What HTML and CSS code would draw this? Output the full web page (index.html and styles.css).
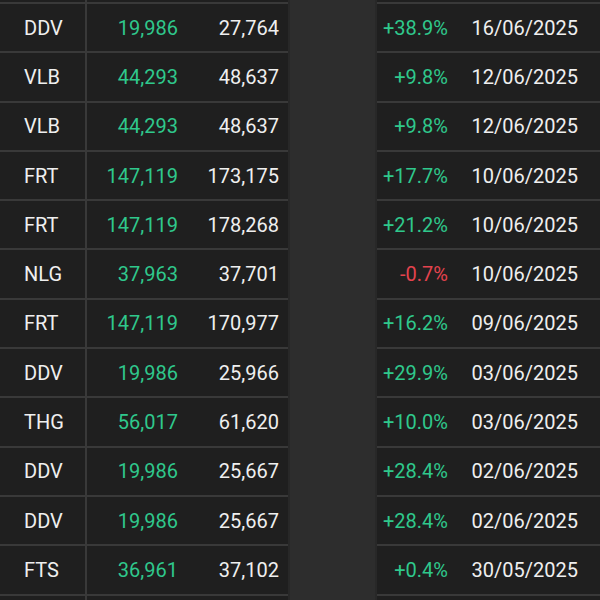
FILE: index.html
```html
<!DOCTYPE html>
<html>
<head>
<meta charset="utf-8">
<link rel="stylesheet" href="styles.css">
</head>
<body>
<div class="board">
  <div class="block left">
    <div class="row"><div class="tk"></div><div class="num up"></div><div class="num"></div></div>
    <div class="row"><div class="tk">DDV</div><div class="num up">19,986</div><div class="num">27,764</div></div>
    <div class="row"><div class="tk">VLB</div><div class="num up">44,293</div><div class="num">48,637</div></div>
    <div class="row"><div class="tk">VLB</div><div class="num up">44,293</div><div class="num">48,637</div></div>
    <div class="row"><div class="tk">FRT</div><div class="num up">147,119</div><div class="num">173,175</div></div>
    <div class="row"><div class="tk">FRT</div><div class="num up">147,119</div><div class="num">178,268</div></div>
    <div class="row"><div class="tk">NLG</div><div class="num up">37,963</div><div class="num">37,701</div></div>
    <div class="row"><div class="tk">FRT</div><div class="num up">147,119</div><div class="num">170,977</div></div>
    <div class="row"><div class="tk">DDV</div><div class="num up">19,986</div><div class="num">25,966</div></div>
    <div class="row"><div class="tk">THG</div><div class="num up">56,017</div><div class="num">61,620</div></div>
    <div class="row"><div class="tk">DDV</div><div class="num up">19,986</div><div class="num">25,667</div></div>
    <div class="row"><div class="tk">DDV</div><div class="num up">19,986</div><div class="num">25,667</div></div>
    <div class="row"><div class="tk">FTS</div><div class="num up">36,961</div><div class="num">37,102</div></div>
    <div class="row"><div class="tk"></div><div class="num up"></div><div class="num"></div></div>
  </div>
  <div class="divider"></div>
  <div class="mid"></div>
  <div class="divider"></div>
  <div class="block right">
    <div class="row"><div class="pct up"></div><div class="date"></div></div>
    <div class="row"><div class="pct up">+38.9%</div><div class="date">16/06/2025</div></div>
    <div class="row"><div class="pct up">+9.8%</div><div class="date">12/06/2025</div></div>
    <div class="row"><div class="pct up">+9.8%</div><div class="date">12/06/2025</div></div>
    <div class="row"><div class="pct up">+17.7%</div><div class="date">10/06/2025</div></div>
    <div class="row"><div class="pct up">+21.2%</div><div class="date">10/06/2025</div></div>
    <div class="row"><div class="pct down">-0.7%</div><div class="date">10/06/2025</div></div>
    <div class="row"><div class="pct up">+16.2%</div><div class="date">09/06/2025</div></div>
    <div class="row"><div class="pct up">+29.9%</div><div class="date">03/06/2025</div></div>
    <div class="row"><div class="pct up">+10.0%</div><div class="date">03/06/2025</div></div>
    <div class="row"><div class="pct up">+28.4%</div><div class="date">02/06/2025</div></div>
    <div class="row"><div class="pct up">+28.4%</div><div class="date">02/06/2025</div></div>
    <div class="row"><div class="pct up">+0.4%</div><div class="date">30/05/2025</div></div>
    <div class="row"><div class="pct up"></div><div class="date"></div></div>
  </div>
</div>
</body>
</html>
```
FILE: styles.css
```css
html, body {
  margin: 0;
  padding: 0;
  background: #1f1f1f;
}
body {
  width: 600px;
  height: 600px;
  overflow: hidden;
  font-family: Roboto, "Liberation Sans", sans-serif;
  font-size: 20px;
  color: #efefef;
}
.board {
  display: flex;
  height: 600px;
  overflow: hidden;
}
.block {
  background: #1f1f1f;
  margin-top: -47.3px;
  display: flex;
  flex-direction: column;
}
.left { width: 288px; }
.right { flex: 1; }
.divider {
  width: 2px;
  background: #282828;
}
.mid {
  width: 85px;
  background: #2d2d2d;
}
.row {
  display: grid;
  height: 49.3px;
  flex: none;
  box-sizing: border-box;
  border-top: 2px solid #393939;
  align-items: center;
}
.left .row {
  grid-template-columns: 87px 91px 101px 1fr;
}
.right .row {
  grid-template-columns: 71px 130px 1fr;
}
.tk {
  height: 100%;
  display: flex;
  align-items: center;
  box-sizing: border-box;
  padding-left: 24px;
  border-right: 2px solid #393939;
}
.num, .pct, .date {
  text-align: right;
}
.up { color: #2fc88c; }
.down { color: #e4434e; }
```
